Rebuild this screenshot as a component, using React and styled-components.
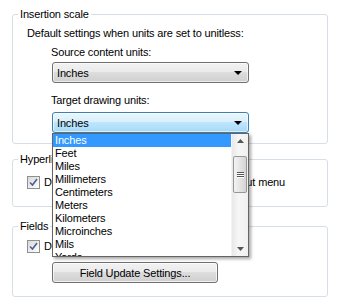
import React, { useState } from 'react';
import styled, { createGlobalStyle } from 'styled-components';

const Global = createGlobalStyle`
  html, body {
    margin: 0;
    background: #ffffff;
  }
  body {
    font-family: 'Liberation Sans', Arial, sans-serif;
    font-size: 11px;
    letter-spacing: -0.15px;
    color: #000;
  }
`;

const Page = styled.div`
  width: 341px;
  height: 306px;
  padding: 7px 0 0 12px;
  box-sizing: border-box;
  overflow: hidden;
`;

const Group = styled.fieldset`
  width: 316px;
  box-sizing: border-box;
  margin: 0 0 ${p => p.gap || 0}px 0;
  padding: ${p => p.pad || '0'};
  border: 1px solid #d5dfe5;
  border-radius: 3px;
  min-width: 0;
`;

// fieldset padding pushes the legend right, pull it back to the box corner
const Legend = styled.legend`
  margin-left: -9px;
  padding: 0 2px;
  line-height: 14px;
  height: 14px;
`;

const Text = styled.div`
  line-height: 13px;
  height: 13px;
  white-space: nowrap;
  margin: ${p => p.m || 0};
`;

const ComboWrap = styled.div`
  position: relative;
  width: 197px;
  margin: ${p => p.m || 0};
`;

const Combo = styled.div`
  height: 21px;
  box-sizing: border-box;
  border: 1px solid ${p => (p.focus ? '#3c7fb1' : '#707070')};
  border-radius: 3px;
  background: ${p =>
    p.focus
      ? 'linear-gradient(#eaf6fd 0%, #d9f0fc 45%, #bee6fd 50%, #a7d9f5 100%)'
      : 'linear-gradient(#f2f2f2 0%, #ebebeb 45%, #dddddd 50%, #cfcfcf 100%)'};
  box-shadow: inset 0 0 0 1px rgba(255, 255, 255, 0.6);
  display: flex;
  align-items: center;
  padding: 0 6px 0 4px;
  justify-content: space-between;
`;

const Arrow = styled.span`
  width: 0;
  height: 0;
  border-left: 4px solid transparent;
  border-right: 4px solid transparent;
  border-top: 4px solid #000;
`;

const List = styled.div`
  position: absolute;
  top: 21px;
  left: 0;
  width: 197px;
  height: 124px;
  box-sizing: border-box;
  border: 1px solid #646464;
  background: #fff;
  box-shadow: 2px 2px 3px rgba(0, 0, 0, 0.35);
  display: flex;
  z-index: 5;
`;

const Items = styled.div`
  flex: 1;
  overflow: hidden;
`;

const Item = styled.div`
  height: 13px;
  line-height: 13px;
  padding-left: 2px;
  white-space: nowrap;
  background: ${p => (p.active ? '#3399ff' : 'transparent')};
  color: ${p => (p.active ? '#fff' : '#000')};
`;

const Scroll = styled.div`
  width: 16px;
  background: linear-gradient(90deg, #e8e8e8, #f6f6f6 40%, #f0f0f0);
  border-left: 1px solid #f4f4f4;
  display: flex;
  flex-direction: column;
  align-items: center;
`;

const ScrollArrow = styled.div`
  height: 14px;
  width: 100%;
  display: flex;
  align-items: center;
  justify-content: center;
`;

const Track = styled.div`
  flex: 1;
  width: 100%;
  padding-top: 8px;
  box-sizing: border-box;
  display: flex;
  justify-content: center;
`;

const Thumb = styled.div`
  width: 14px;
  height: 37px;
  box-sizing: border-box;
  border: 1px solid #979797;
  border-radius: 2px;
  background: linear-gradient(90deg, #f3f3f3, #e4e4e4 50%, #d4d4d4);
  display: flex;
  flex-direction: column;
  align-items: center;
  justify-content: center;
  gap: 1px;
`;

const Grip = styled.span`
  width: 7px;
  height: 1px;
  background: #555;
  box-shadow: 0 1px 0 #fff;
`;

const CheckRow = styled.div`
  display: flex;
  align-items: center;
  gap: 4px;
  margin: ${p => p.m || 0};
  white-space: nowrap;
  line-height: 13px;
`;

const Box = styled.span`
  width: 13px;
  height: 13px;
  box-sizing: border-box;
  border: 1px solid #8e8f8f;
  background: linear-gradient(135deg, #d8d8d8, #f4f4f4 70%, #ffffff);
  display: flex;
  align-items: center;
  justify-content: center;
  flex: none;
`;

const Button = styled.button`
  width: 166px;
  height: 21px;
  margin: ${p => p.m || 0};
  box-sizing: border-box;
  border: 1px solid #707070;
  border-radius: 3px;
  background: linear-gradient(#f2f2f2 0%, #ebebeb 45%, #dddddd 50%, #cfcfcf 100%);
  box-shadow: inset 0 0 0 1px rgba(255, 255, 255, 0.7);
  font-family: inherit;
  font-size: 11px;
  letter-spacing: inherit;
  color: #000;
  padding: 0;
  display: block;
`;

const units = [
  'Inches',
  'Feet',
  'Miles',
  'Millimeters',
  'Centimeters',
  'Meters',
  'Kilometers',
  'Microinches',
  'Mils',
  'Yards'
];

const Check = () => (
  <Box>
    <svg width="9" height="9" viewBox="0 0 9 9">
      <path d="M1 4.5 L3.5 7 L8 1" fill="none" stroke="#4a5f97" strokeWidth="1.6" />
    </svg>
  </Box>
);

const App = () => {
  const [active] = useState(0);

  return (
    <Page>
      <Global />
      <Group gap={8} pad="6px 0 10px 14px">
        <Legend>Insertion scale</Legend>
        <Text>Default settings when units are set to unitless:</Text>
        <Text m="6px 0 0 24px">Source content units:</Text>
        <ComboWrap m="3px 0 0 25px">
          <Combo>
            <span>Inches</span>
            <Arrow />
          </Combo>
        </ComboWrap>
        <Text m="11px 0 0 24px">Target drawing units:</Text>
        <ComboWrap m="5px 0 0 25px">
          <Combo focus>
            <span>Inches</span>
            <Arrow />
          </Combo>
          <List>
            <Items>
              {units.map((u, i) => (
                <Item key={u} active={i === active}>
                  {u}
                </Item>
              ))}
            </Items>
            <Scroll>
              <ScrollArrow>
                <svg width="7" height="4" viewBox="0 0 7 4">
                  <path d="M0 4 L3.5 0 L7 4 Z" fill="#555" />
                </svg>
              </ScrollArrow>
              <Track>
                <Thumb>
                  <Grip />
                  <Grip />
                  <Grip />
                </Thumb>
              </Track>
              <ScrollArrow>
                <svg width="7" height="4" viewBox="0 0 7 4">
                  <path d="M0 0 L3.5 4 L7 0 Z" fill="#555" />
                </svg>
              </ScrollArrow>
            </Scroll>
          </List>
        </ComboWrap>
      </Group>

      <Group gap={12} pad="10px 0 17px 14px">
        <Legend>Hyperlink</Legend>
        <CheckRow>
          <Check />
          <span>Display hyperlink cursor, tooltip, and shortcut menu</span>
        </CheckRow>
      </Group>

      <Group pad="7px 0 13px 14px">
        <Legend>Fields</Legend>
        <CheckRow>
          <Check />
          <span>Display background of fields</span>
        </CheckRow>
        <Button m="9px 0 0 25px">Field Update Settings...</Button>
      </Group>
    </Page>
  );
};

export default App;
